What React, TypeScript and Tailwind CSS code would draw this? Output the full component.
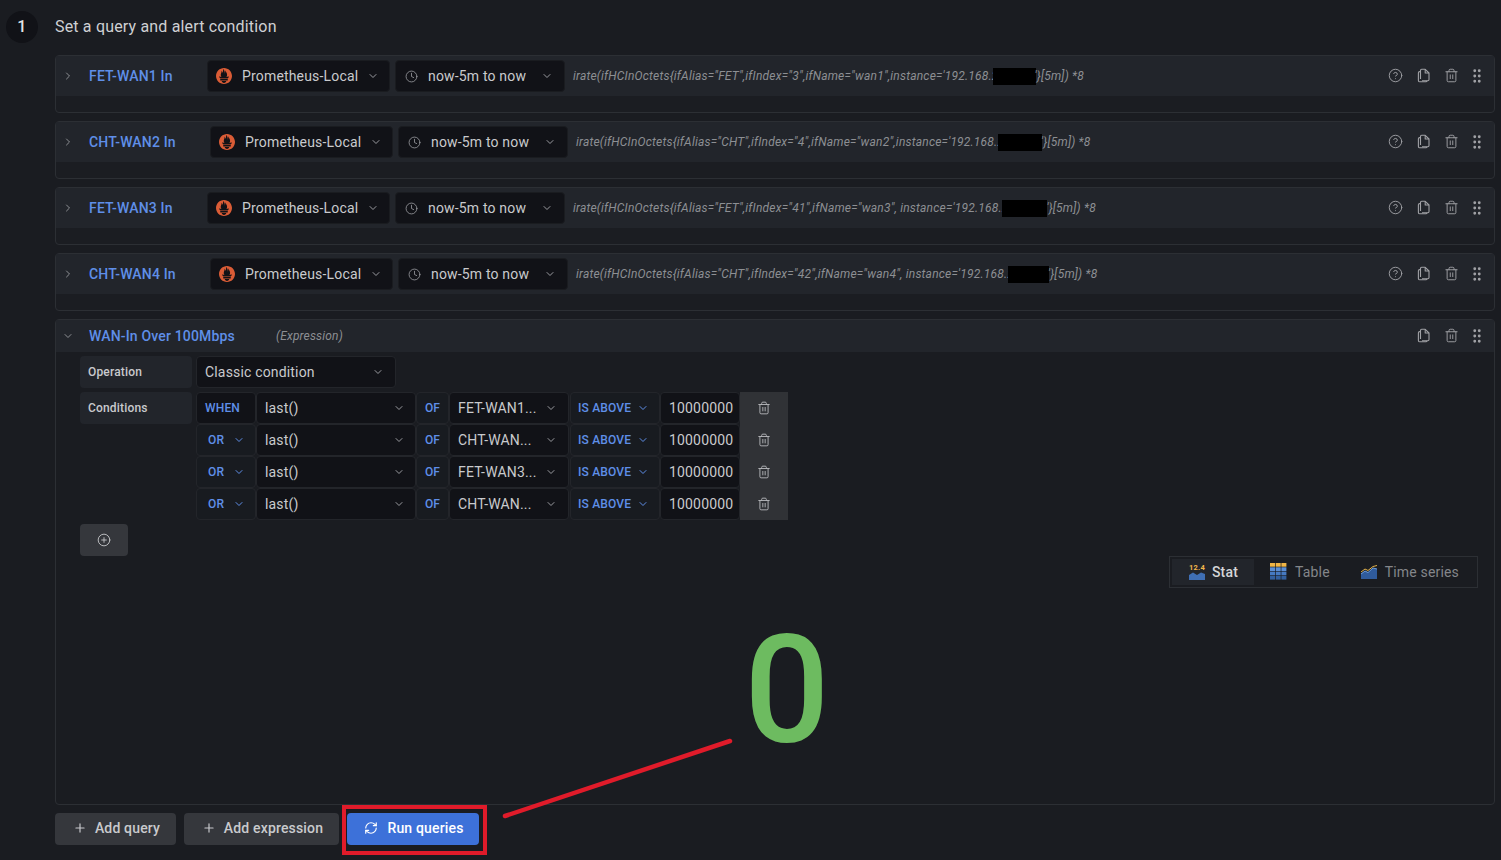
import { ChevronDown, ChevronRight, CirclePlus, Clock, GripVertical, CircleHelp, Plus, RefreshCw, Trash2 } from "lucide-react";
import { SiPrometheus } from "react-icons/si";

type Query = {
  name: string;
  nameWidth: string;
  before: string;
  redact: string;
  after: string;
};

const QUERIES: Query[] = [
  {
    name: "FET-WAN1 In",
    nameWidth: "w-[118px]",
    before: `irate(ifHCInOctets{ifAlias="FET",ifIndex="3",ifName="wan1",instance='192.168.2`,
    redact: "w-[43px]",
    after: `'}[5m]) *8`,
  },
  {
    name: "CHT-WAN2 In",
    nameWidth: "w-[121px]",
    before: `irate(ifHCInOctets{ifAlias="CHT",ifIndex="4",ifName="wan2",instance='192.168.2`,
    redact: "w-[44px]",
    after: `'}[5m]) *8`,
  },
  {
    name: "FET-WAN3 In",
    nameWidth: "w-[118px]",
    before: `irate(ifHCInOctets{ifAlias="FET",ifIndex="41",ifName="wan3", instance='192.168.2`,
    redact: "w-[45px]",
    after: `'}[5m]) *8`,
  },
  {
    name: "CHT-WAN4 In",
    nameWidth: "w-[121px]",
    before: `irate(ifHCInOctets{ifAlias="CHT",ifIndex="42",ifName="wan4", instance='192.168.2`,
    redact: "w-[41px]",
    after: `'}[5m]) *8`,
  },
];

const CONDITIONS = [
  { join: "WHEN", field: "FET-WAN1..." },
  { join: "OR", field: "CHT-WAN..." },
  { join: "OR", field: "FET-WAN3..." },
  { join: "OR", field: "CHT-WAN..." },
];

const CopyIcon = () => (
  <svg width="14" height="15" viewBox="0 0 14 15" fill="none" stroke="currentColor" strokeWidth="1.1" strokeLinejoin="round">
    <path d="M3.5 11V2.5a1.2 1.2 0 0 1 1.2-1.2H8.2L12 5v6.5a1.2 1.2 0 0 1-1.2 1.2H5" />
    <path d="M8.2 1.3V5H12" />
    <path d="M3.5 3.6H2.6A1.2 1.2 0 0 0 1.4 4.8v7.6a1.4 1.4 0 0 0 1.4 1.4h6a1.2 1.2 0 0 0 1.2-1.1" />
  </svg>
);

const HeaderActions = ({ help }: { help?: boolean }) => (
  <div className="ml-auto flex items-center pb-px text-[#a0a1a5]">
    {help && <CircleHelp size={15} strokeWidth={1.5} className="mr-[14px]" />}
    <span className="mr-[13px] flex w-[14px] justify-center"><CopyIcon /></span>
    <Trash2 size={15} strokeWidth={1.5} className="mr-[9px]" />
    <GripVertical size={18} strokeWidth={1.8} className="mr-[8px]" />
  </div>
);

const QueryRow = ({ query }: { query: Query }) => (
  <div className="h-[58px] rounded-sm border border-[#2c2f34] bg-[#1b1d22]">
    <div className="flex h-[40px] items-center bg-[#22252b]">
      <ChevronRight size={12} className="ml-[6px] w-[12px] text-[#8e9094]" />
      <div className={`ml-[15px] text-sm font-medium text-[#5f8fe8] ${query.nameWidth}`}>{query.name}</div>
      <div className="flex h-[32px] w-[183px] items-center rounded-sm border border-[#1a1c20] bg-[#111217] text-[#c9cacd]">
        <SiPrometheus size={16} className="ml-[8px] text-[#da5c36]" />
        <span className="ml-[10px] text-sm">Prometheus-Local</span>
        <ChevronDown size={12} className="ml-auto mr-[10px] text-[#9a9ba0]" />
      </div>
      <div className="ml-[5px] flex h-[32px] w-[170px] items-center rounded-sm border border-[#1a1c20] bg-[#111217] text-[#c9cacd]">
        <Clock size={13} strokeWidth={1.5} className="ml-[9px] text-[#9a9ba0]" />
        <span className="mb-px ml-[10px] text-sm">now-5m to now</span>
        <ChevronDown size={12} className="ml-auto mr-[11px] text-[#9a9ba0]" />
      </div>
      <div className="ml-[8px] flex items-center whitespace-nowrap text-xs italic tracking-[0.2px] text-[#8d8f93]">
        <span>{query.before}</span>
        <span className={`-ml-[6px] h-[17px] shrink-0 bg-black ${query.redact}`} />
        <span className="-ml-[1px]">{query.after}</span>
      </div>
      <HeaderActions help />
    </div>
  </div>
);

const Cell = ({ className, children }: { className: string; children: React.ReactNode }) => (
  <div className={`flex h-[32px] shrink-0 items-center rounded-sm border border-[#23252a] ${className}`}>{children}</div>
);

const ConditionRow = ({ join, field }: { join: string; field: string }) => (
  <div className="flex h-[32px]">
    <Cell className={`w-[60px] text-xs font-medium text-[#5f8fe8] ${join === "WHEN" ? "bg-[#111217] pl-[8px]" : "bg-[#181b20] pl-[11px]"}`}>
      {join}
      {join === "OR" && <ChevronDown size={12} className="ml-[9px]" />}
    </Cell>
    <Cell className="w-[160px] bg-[#111217] pl-[8px] text-sm text-[#c9cacd]">
      last()
      <ChevronDown size={12} className="ml-auto mr-[10px] text-[#9a9ba0]" />
    </Cell>
    <Cell className="w-[33px] justify-center bg-[#181b20] text-xs font-medium text-[#5f8fe8]">OF</Cell>
    <Cell className="w-[120px] bg-[#111217] pl-[8px] text-sm text-[#c9cacd]">
      {field}
      <ChevronDown size={12} className="ml-auto mr-[11px] text-[#9a9ba0]" />
    </Cell>
    <Cell className="ml-px w-[90px] bg-[#181b20] pl-[7px] text-xs font-medium text-[#5f8fe8]">
      IS ABOVE
      <ChevronDown size={12} className="ml-[6px]" />
    </Cell>
    <Cell className="w-[80px] bg-[#111217] pl-[8px] text-sm text-[#c9cacd]">10000000</Cell>
    <div className="flex h-[32px] w-[48px] items-center justify-center bg-[#303236] pb-px text-[#b5b6b9]">
      <Trash2 size={14} strokeWidth={1.6} />
    </div>
  </div>
);

const StatIcon = () => (
  <svg width="18" height="18" viewBox="0 0 18 18">
    <text x="9" y="6.5" textAnchor="middle" fontSize="7.5" fontWeight="700" fill="#f2b84b" fontFamily="Roboto, sans-serif">12.4</text>
    <path d="M1 12l4-2.5 4 2.5 4-2.5 4 1.5v6H1z" fill="#3f6fb5" />
  </svg>
);

const TableIcon = () => (
  <svg width="17" height="17" viewBox="0 0 17 17">
    {[0, 1, 2, 3].map((r) =>
      [0, 1, 2].map((c) => (
        <rect key={`${r}-${c}`} x={c * 5.7} y={r * 4.3} width="5" height="3.7" fill={r === 0 ? "#f0b545" : r === 1 ? "#5b8fd6" : r === 2 ? "#467ac2" : "#33609f"} />
      )),
    )}
  </svg>
);

const SeriesIcon = () => (
  <svg width="18" height="17" viewBox="0 0 18 17">
    <path d="M1 11l4-3 3 1.5L13 5l4 1v10H1z" fill="#2f5b9c" />
    <path d="M1 9l4-3 3 1.5 5-4 4-1" fill="none" stroke="#e3b24a" strokeWidth="1" />
    <path d="M1 11l4-3 3 1.5L13 5l4 1" fill="none" stroke="#6d9fe0" strokeWidth="1" />
  </svg>
);

export default function App() {
  return (
    <div className="relative h-[860px] w-full overflow-hidden bg-[#1a1c21] pt-[11px] font-['Roboto',sans-serif] tracking-[0.01071em]">
      <div className="flex h-8 items-center gap-[17px] pl-[6px]">
        <div className="flex h-8 w-8 items-center justify-center rounded-full bg-[#111217] text-base font-medium text-[#e3e4e6]">1</div>
        <div className="text-base text-[#cfd0d3]">Set a query and alert condition</div>
      </div>

      <div className="ml-[55px] mt-[12px] flex w-[1440px] flex-col gap-[8px]">
        {QUERIES.map((query) => (
          <QueryRow key={query.name} query={query} />
        ))}

        <div className="flex h-[486px] flex-col rounded-sm border border-[#2c2f34]">
          <div className="flex h-[32px] shrink-0 items-center bg-[#22252b]">
            <ChevronDown size={12} className="ml-[6px] text-[#8e9094]" />
            <div className="ml-[15px] w-[187px] text-sm font-medium text-[#5f8fe8]">WAN-In Over 100Mbps</div>
            <div className="text-xs italic text-[#8d8f93]">(Expression)</div>
            <HeaderActions />
          </div>

          <div className="flex flex-1 flex-col pl-[24px] pt-[4px]">
            <div className="flex h-[32px] gap-[4px]">
              <div className="flex h-[32px] w-[112px] items-center rounded-sm bg-[#22252b] pl-[8px] text-xs font-medium text-[#c9cacd]">Operation</div>
              <div className="flex h-[32px] w-[200px] items-center rounded-sm border border-[#23252a] bg-[#111217] pl-[8px] text-sm text-[#c9cacd]">
                Classic condition
                <ChevronDown size={12} className="ml-auto mr-[11px] text-[#9a9ba0]" />
              </div>
            </div>
            <div className="mt-[4px] flex gap-[4px]">
              <div className="flex h-[32px] w-[112px] items-center rounded-sm bg-[#22252b] pl-[8px] text-xs font-medium text-[#c9cacd]">Conditions</div>
              <div className="flex flex-col">
                {CONDITIONS.map((c, i) => (
                  <ConditionRow key={i} join={c.join} field={c.field} />
                ))}
              </div>
            </div>
            <div className="mt-[4px] flex h-[32px] w-[48px] items-center justify-center rounded-sm bg-[#35373c] text-[#c9cacd]">
              <CirclePlus size={14} strokeWidth={1.5} />
            </div>

            <div className="mr-[16px] flex justify-end">
              <div className="flex h-[32px] w-[309px] items-center border border-[#2c2f34] pb-px pl-[2px] text-sm">
                <div className="flex h-[26px] w-[82px] items-center justify-center gap-[6px] bg-[#22252b] font-medium text-[#d5d6d8]">
                  <StatIcon />
                  Stat
                </div>
                <div className="ml-[16px] flex items-center gap-[8px] text-[#84868a]">
                  <TableIcon />
                  Table
                </div>
                <div className="ml-[30px] flex items-center gap-[7px] text-[#84868a]">
                  <SeriesIcon />
                  Time series
                </div>
              </div>
            </div>

            <div className="flex flex-1 items-start justify-center pt-[28px]">
              <div className="text-[150px] font-medium leading-[150px] tracking-normal text-[#6dbb60]">0</div>
            </div>
          </div>
        </div>

        <div className="flex h-8 gap-2">
          <button className="flex w-[121px] items-center justify-center gap-[8px] rounded-sm bg-[#35373c] pb-[2px] pl-[2px] text-sm font-medium text-[#c9cacd]">
            <Plus size={14} />
            Add query
          </button>
          <button className="flex w-[155px] items-center justify-center gap-[8px] rounded-sm bg-[#35373c] pb-[2px] pl-[2px] text-sm font-medium text-[#c9cacd]">
            <Plus size={14} />
            Add expression
          </button>
          <button className="relative flex w-[132px] items-center justify-center gap-[9px] rounded-sm bg-[#3d71d9] pb-[2px] pl-[2px] text-sm font-medium text-white">
            <RefreshCw size={14} />
            Run queries
            <span className="absolute -bottom-[10px] -left-[5px] -right-[8px] -top-[8px] border-4 border-[#e01b2a]" />
          </button>
        </div>
      </div>

      <svg className="absolute left-[500px] top-[735px]" width="235" height="86" viewBox="0 0 235 86">
        <line x1="5" y1="81" x2="230" y2="6" stroke="#e01b2a" strokeWidth="4.5" strokeLinecap="round" />
      </svg>
    </div>
  );
}
